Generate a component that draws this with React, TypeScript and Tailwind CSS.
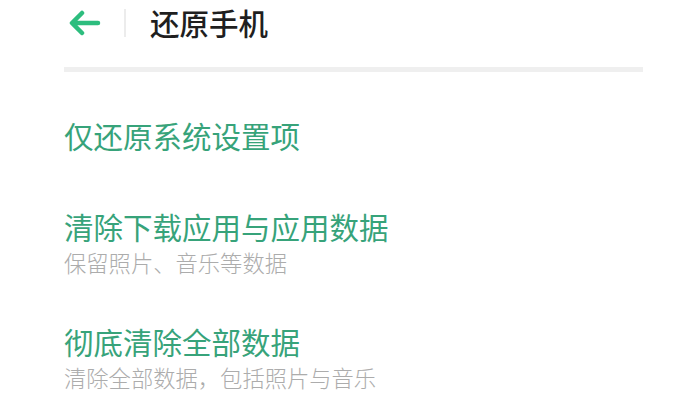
import React from 'react';

const items = [
  { title: '仅还原系统设置项', gap: 'mt-0' },
  { title: '清除下载应用与应用数据', sub: '保留照片、音乐等数据', gap: 'mt-[55px]' },
  { title: '彻底清除全部数据', sub: '清除全部数据，包括照片与音乐', gap: 'mt-[48px]' },
];

export default function App() {
  return (
    <div
      className="w-[700px] h-[415px] bg-white overflow-hidden"
      style={{ fontFamily: '"Noto Sans CJK SC", "Noto Sans", sans-serif' }}
    >
      {/* Header */}
      <div className="flex items-center h-[46px] pl-[68px]">
        <svg width="33" height="26" viewBox="0 0 33 26" fill="none" className="text-[#2dbd7e]">
          <path
            d="M30 13H5M14 3L4 13l10 10"
            stroke="currentColor"
            strokeWidth="4.5"
            strokeLinecap="round"
            strokeLinejoin="round"
          />
        </svg>
        <div className="ml-[23px] w-[2px] h-[28px] bg-[#ececec]" />
        <h1 className="ml-[24px] text-[29.5px] leading-none font-medium text-[#1f1f1f]">还原手机</h1>
      </div>

      <div className="mt-[21px] ml-[64px] w-[579px] h-[5px] bg-[#efefef]" />

      {/* Options */}
      <div className="px-[64px] pt-[45px] flex flex-col">
        {items.map((it) => (
          <div key={it.title} className={`flex flex-col ${it.gap}`}>
            <div className="text-[29.5px] leading-[36px] text-[#37a37a]">{it.title}</div>
            {it.sub && (
              <div className="mt-[5px] text-[22.3px] leading-[26px] font-light text-[#acacac]">{it.sub}</div>
            )}
          </div>
        ))}
      </div>
    </div>
  );
}
